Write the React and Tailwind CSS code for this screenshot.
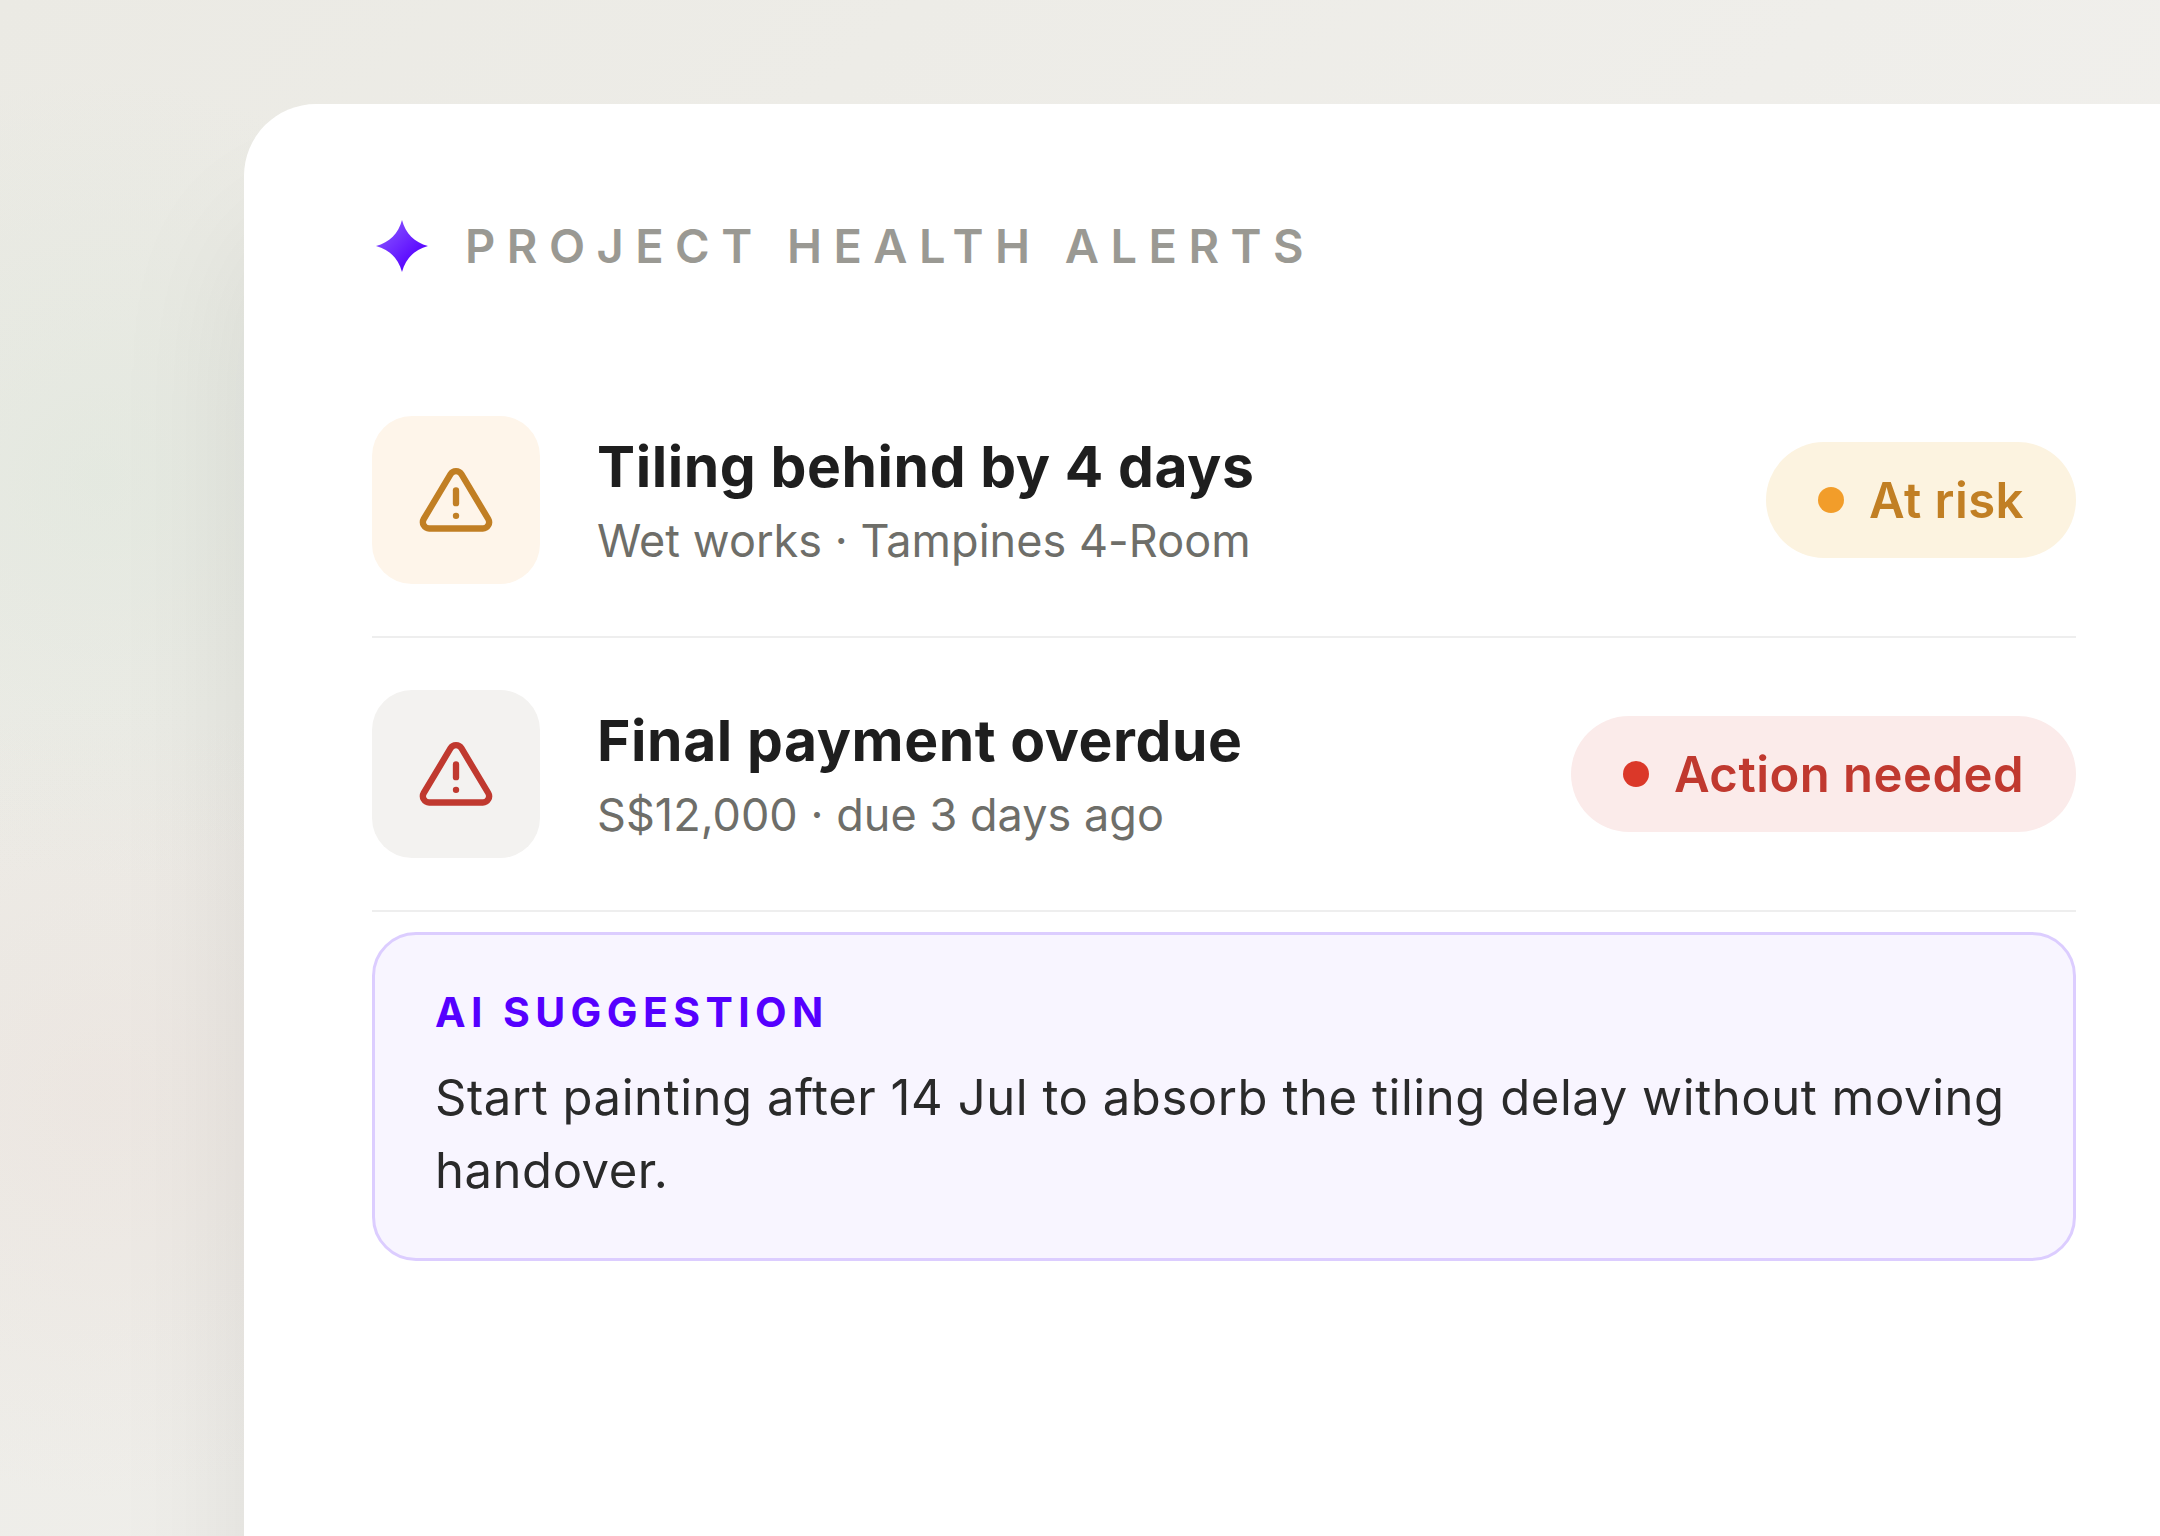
const alerts = [
  {
    title: 'Tiling behind by 4 days',
    detail: 'Wet works · Tampines 4-Room',
    status: 'At risk',
    tile: 'bg-[#fef5ea] text-[#c17f24]',
    pill: 'bg-[#fcf3e0] text-[#c17f24]',
    dot: 'bg-[#f29d2a]',
  },
  {
    title: 'Final payment overdue',
    detail: 'S$12,000 · due 3 days ago',
    status: 'Action needed',
    tile: 'bg-[#f3f2f0] text-[#c0392f]',
    pill: 'bg-[#fbebea] text-[#c0392f]',
    dot: 'bg-[#db3829]',
  },
];

function Sparkle() {
  return (
    <svg viewBox="0 0 24 24" className="size-[60px]">
      <defs>
        <linearGradient id="sparkle" x1="0" y1="0" x2="1" y2="1">
          <stop offset="0.15" stopColor="#8650ff" />
          <stop offset="0.8" stopColor="#5500ff" />
        </linearGradient>
      </defs>
      <path
        fill="url(#sparkle)"
        d="M12 1.6C13.4 7 17 10.6 22.4 12C17 13.4 13.4 17 12 22.4C10.6 17 7 13.4 1.6 12C7 10.6 10.6 7 12 1.6Z"
      />
    </svg>
  );
}

function WarningIcon() {
  return (
    <svg
      viewBox="0 0 24 24"
      className="size-[76px]"
      fill="none"
      stroke="currentColor"
      strokeWidth="2"
      strokeLinecap="round"
      strokeLinejoin="round"
    >
      <path d="M10.29 3.86 1.82 18a2 2 0 0 0 1.71 3h16.94a2 2 0 0 0 1.71-3L13.71 3.86a2 2 0 0 0-3.42 0z" />
      <path d="M12 9v4" />
      <path d="M12 17h.01" />
    </svg>
  );
}

function AlertRow({ alert }) {
  return (
    <li className="flex items-center gap-[57px] border-b-2 border-[#eeeeee] py-13">
      <div className={`flex size-42 items-center justify-center rounded-[40px] ${alert.tile}`}>
        <WarningIcon />
      </div>
      <div className="flex-1">
        <h3 className="text-[57px] leading-[72px] font-bold tracking-[0.58px] text-[#1e1e1e]">{alert.title}</h3>
        <p className="mt-2.5 text-[45px] leading-[56px] tracking-[0.04px] text-[#6e6e69]">{alert.detail}</p>
      </div>
      <div className={`flex h-29 items-center gap-[25px] rounded-full px-13 ${alert.pill}`}>
        <span className={`size-6.5 rounded-full ${alert.dot}`} />
        <span className="pt-0.5 text-[49px] font-semibold tracking-[0.48px] whitespace-nowrap">{alert.status}</span>
      </div>
    </li>
  );
}

export default function App() {
  return (
    <div className="h-[1536px] w-[2160px] overflow-hidden bg-[radial-gradient(circle_at_100px_478px,rgba(214,228,214,0.36),transparent_400px),radial-gradient(circle_at_100px_1098px,rgba(232,214,208,0.28),transparent_400px),linear-gradient(135deg,#ebeae4,#f1f0ed_75%)] pt-26 pl-61 font-['Inter',sans-serif]">
      <div className="h-[1600px] w-[2000px] rounded-[72px] bg-white pt-28 pl-32 shadow-[0_120px_140px_rgba(30,30,20,0.08)]">
        <div className="w-[1704px]">
          <div className="flex items-center gap-[33px]">
            <Sparkle />
            <h2 className="text-[47px] leading-[60px] font-semibold tracking-[11.45px] text-[#9a9993]">
              PROJECT HEALTH ALERTS
            </h2>
          </div>

          <ul className="mt-22">
            {alerts.map((alert) => (
              <AlertRow key={alert.title} alert={alert} />
            ))}
          </ul>

          <div className="mt-5 rounded-[44px] border-3 border-[#dccdff] bg-[#f8f5ff] px-15 pt-13 pb-[51px]">
            <p className="text-[41px] leading-[50px] font-bold tracking-[5.38px] text-[#5500ff]">AI SUGGESTION</p>
            <p className="mt-[25px] text-[49px] leading-[72.5px] tracking-[0.55px] text-[#2a2a2a]">
              Start painting after 14 Jul to absorb the tiling delay without moving handover.
            </p>
          </div>
        </div>
      </div>
    </div>
  );
}
